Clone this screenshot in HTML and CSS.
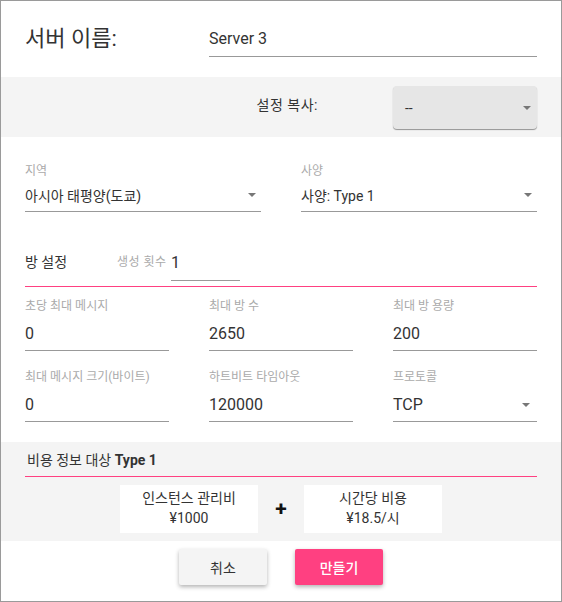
FILE: index.html
```html
<!DOCTYPE html>
<html lang="ko">
<head>
<meta charset="utf-8">
<title>서버 만들기</title>
<link rel="stylesheet" href="styles.css">
</head>
<body>
<div class="dialog">
  <div class="name-row">
    <label class="name-label">서버 이름:</label>
    <input class="name-input" value="Server 3">
  </div>

  <div class="copy-band">
    <span class="copy-label">설정 복사:</span>
    <div class="copy-select">
      <span>--</span>
      <svg class="caret" width="8" height="4" viewBox="0 0 8 4"><path d="M0 0h8L4 4z"/></svg>
    </div>
  </div>

  <div class="section">
    <div class="two-col">
      <div class="field">
        <div class="field-label">지역</div>
        <div class="select">
          <span>아시아 태평양(도쿄)</span>
          <svg class="caret" width="8" height="4" viewBox="0 0 8 4"><path d="M0 0h8L4 4z"/></svg>
        </div>
      </div>
      <div class="field">
        <div class="field-label">사양</div>
        <div class="select">
          <span>사양: Type 1</span>
          <svg class="caret" width="8" height="4" viewBox="0 0 8 4"><path d="M0 0h8L4 4z"/></svg>
        </div>
      </div>
    </div>
    <div class="room-row">
      <span class="room-title">방 설정</span>
      <span class="count-label">생성 횟수</span>
      <input class="count-input" value="1">
    </div>
  </div>

  <div class="grid">
    <div class="field">
      <div class="field-label">초당 최대 메시지</div>
      <input class="grid-input" value="0">
    </div>
    <div class="field">
      <div class="field-label">최대 방 수</div>
      <input class="grid-input" value="2650">
    </div>
    <div class="field">
      <div class="field-label">최대 방 용량</div>
      <input class="grid-input" value="200">
    </div>
    <div class="field">
      <div class="field-label">최대 메시지 크기(바이트)</div>
      <input class="grid-input" value="0">
    </div>
    <div class="field">
      <div class="field-label">하트비트 타임아웃</div>
      <input class="grid-input" value="120000">
    </div>
    <div class="field">
      <div class="field-label">프로토콜</div>
      <div class="grid-select">
        <span>TCP</span>
        <svg class="caret" width="8" height="4" viewBox="0 0 8 4"><path d="M0 0h8L4 4z"/></svg>
      </div>
    </div>
  </div>

  <div class="cost-band">
    <div class="cost-title">비용 정보 대상 <b>Type 1</b></div>
    <div class="cost-boxes">
      <div class="cost-box">
        <div>인스턴스 관리비</div>
        <div>¥1000</div>
      </div>
      <div class="plus">+</div>
      <div class="cost-box">
        <div>시간당 비용</div>
        <div>¥18.5/시</div>
      </div>
    </div>
  </div>

  <div class="actions">
    <button class="btn btn-cancel">취소</button>
    <button class="btn btn-create">만들기</button>
  </div>
</div>
</body>
</html>
```

FILE: styles.css
```css
html, body {
  margin: 0;
  padding: 0;
  background: #fff;
}

body {
  font-family: Roboto, "Noto Sans CJK KR", sans-serif;
  color: #333;
}

.dialog {
  width: 562px;
  height: 602px;
  box-sizing: border-box;
  border: 1px solid #9a9a9a;
  background: #fff;
  display: flex;
  flex-direction: column;
}

input {
  font-family: inherit;
  color: #333;
  border: none;
  outline: none;
  background: transparent;
  margin: 0;
  box-sizing: border-box;
  border-bottom: 1px solid #999;
}

.caret {
  fill: #777;
  flex: 0 0 auto;
}

/* name row */
.name-row {
  height: 76px;
  box-sizing: border-box;
  padding: 24px 24px 19px;
  display: flex;
  align-items: flex-start;
}

.name-label {
  flex: 0 0 184px;
  font-size: 22px;
  line-height: 28px;
  color: #333;
}

.name-input {
  flex: 1;
  height: 32px;
  padding: 0 0 4px;
  font-size: 16px;
}

/* copy band */
.copy-band {
  height: 60px;
  background: #f4f4f4;
  display: flex;
  align-items: center;
  justify-content: flex-end;
  padding: 0 24px;
}

.copy-label {
  font-size: 14px;
  margin-right: 75px;
  padding-bottom: 6px;
  letter-spacing: 0.5px;
}

.copy-select {
  width: 144px;
  height: 43px;
  box-sizing: border-box;
  background: #e6e6e6;
  border-radius: 4px;
  box-shadow: 0 1px 1px rgba(0, 0, 0, 0.4);
  display: flex;
  align-items: center;
  justify-content: space-between;
  padding: 2px 6px 0 12px;
  font-size: 14px;
}

/* region / spec */
.section {
  padding: 26px 24px 0;
}

.two-col {
  display: grid;
  grid-template-columns: 1fr 1fr;
  column-gap: 40px;
}

.field-label {
  font-size: 12px;
  line-height: 16px;
  color: #aaa;
  white-space: nowrap;
}

.select {
  margin-top: 3px;
  height: 30px;
  box-sizing: border-box;
  border-bottom: 1px solid #999;
  display: flex;
  align-items: center;
  justify-content: space-between;
  padding: 0 5px 3px 0;
  font-size: 14px;
}

.room-row {
  height: 75px;
  box-sizing: border-box;
  display: flex;
  align-items: flex-end;
  border-bottom: 1px solid #ff4081;
  padding-bottom: 5px;
}

.room-title {
  width: 92px;
  font-size: 14px;
  line-height: 20px;
  padding-bottom: 9px;
}

.count-label {
  width: 54px;
  font-size: 12px;
  line-height: 20px;
  color: #aaa;
  padding-bottom: 9px;
  letter-spacing: 0.5px;
  white-space: nowrap;
}

.count-input {
  width: 69px;
  height: 29px;
  padding: 0 0 8px;
  font-size: 16px;
  line-height: 20px;
}

/* grid */
.grid {
  display: grid;
  grid-template-columns: repeat(3, 1fr);
  column-gap: 40px;
  row-gap: 18px;
  padding: 11px 24px 0;
}

.grid-input {
  display: block;
  width: 100%;
  height: 37px;
  padding: 3px 0 0;
  font-size: 16px;
}

.grid-select {
  height: 37px;
  box-sizing: border-box;
  padding: 3px 7px 0 0;
  border-bottom: 1px solid #999;
  display: flex;
  align-items: center;
  justify-content: space-between;
  font-size: 16px;
}

/* cost */
.cost-band {
  margin-top: 20px;
  background: #f4f4f4;
  padding: 8px 24px;
}

.cost-title {
  font-size: 14px;
  line-height: 20px;
  padding: 0 2px 6px;
  border-bottom: 1px solid #ff4081;
}

.cost-title b {
  font-weight: 700;
}

.cost-boxes {
  margin-top: 8px;
  display: flex;
  justify-content: center;
}

.cost-box {
  width: 138px;
  height: 48px;
  box-sizing: border-box;
  padding-top: 3px;
  background: #fff;
  text-align: center;
  font-size: 14px;
  line-height: 20px;
}

.plus {
  width: 46px;
  align-self: center;
  text-align: center;
  font-size: 21px;
  font-weight: 700;
  color: #111;
  line-height: 24px;
}

/* actions */
.actions {
  margin-top: 8px;
  display: flex;
  justify-content: center;
  gap: 28px;
}

.btn {
  width: 88px;
  height: 36px;
  border: none;
  border-radius: 2px;
  font-family: inherit;
  font-size: 14px;
  box-shadow: 0 2px 4px rgba(0, 0, 0, 0.3);
  cursor: pointer;
}

.btn-cancel {
  background: #f4f4f4;
  color: #333;
}

.btn-create {
  background: #ff4081;
  color: #fff;
  font-weight: 500;
}
```
